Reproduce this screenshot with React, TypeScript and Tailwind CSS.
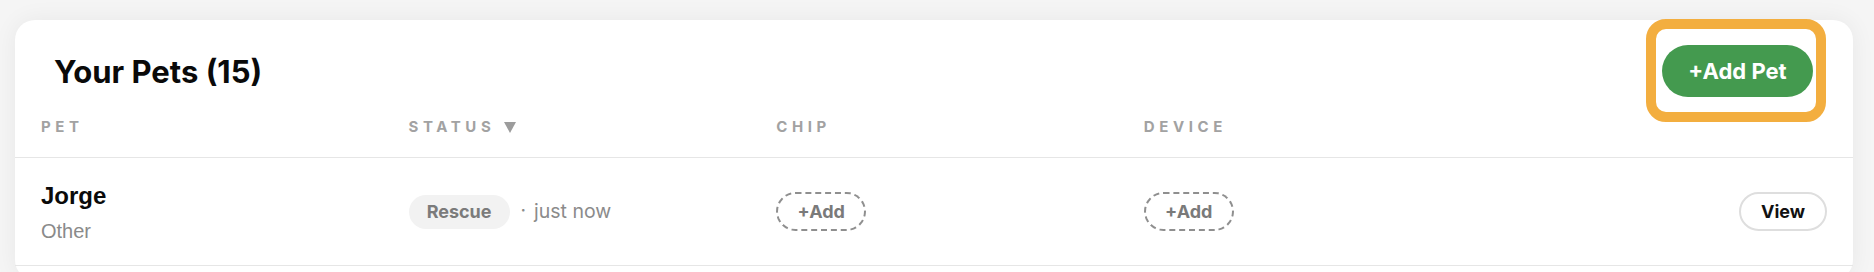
import React from "react";

const columns = ["Pet", "Status", "Chip", "Device", ""];

const DashedAdd = () => (
  <button className="h-[39px] w-[90px] rounded-full border-2 border-dashed border-[#8f8f8f] text-[18px] font-bold text-[#7a7a7a]">
    +Add
  </button>
);

const App = () => (
  <div className="min-h-[272px] bg-[#f5f5f5] pt-5 pl-[15px] pr-[21px] font-['Inter',sans-serif]">
    <div className="h-[260px] rounded-[20px] bg-white shadow-[0_0_24px_rgba(0,0,0,0.06)]">
      <div className="flex items-center justify-between pl-[39px] pr-10 pt-[25px]">
        <h1 className="mt-[2px] text-[31px] leading-[34px] font-bold text-[#0a0a0a]">
          Your Pets (15)
        </h1>
        <div className="relative">
          <div className="pointer-events-none absolute -top-[26px] -bottom-[25px] -left-4 -right-[13px] rounded-[20px] border-[10px] border-[#f3ae3f]" />
          <button className="h-[52px] w-[151px] rounded-full bg-[#449a4f] text-[22px] font-bold text-white">
            +Add Pet
          </button>
        </div>
      </div>
      <table className="w-full table-fixed border-collapse">
        <thead>
          <tr className="border-b border-[#e6e6e6]">
            {columns.map((c, i) => (
              <th
                key={i}
                className="px-[26px] pt-5 pb-5 text-left text-[15px] leading-5 font-bold uppercase tracking-[4.6px] text-[#a2a2a2]"
              >
                <span className="inline-flex items-center">
                  {c}
                  {c === "Status" && (
                    <svg width="12" height="11" viewBox="0 0 12 11" className="ml-[9px]">
                      <polygon points="0,0 12,0 6,11" fill="#9c9c9c" />
                    </svg>
                  )}
                </span>
              </th>
            ))}
          </tr>
        </thead>
        <tbody>
          <tr className="border-b border-[#e6e6e6]">
            <td className="px-[26px] pt-[24px] pb-[22px] align-middle font-['Liberation_Sans',Arial,sans-serif]">
              <div className="text-[24px] leading-7 font-bold text-[#0a0a0a]">Jorge</div>
              <div className="mt-[9px] text-[20px] leading-6 text-[#8a8a8a]">Other</div>
            </td>
            <td className="px-[26px] align-middle">
              <div className="flex items-center">
                <span className="flex h-[34px] w-[101px] items-center justify-center rounded-full bg-[#f2f2f2] text-[18px] font-bold text-[#7b7b7b]">
                  Rescue
                </span>
                <span className="ml-[11px] text-[19px] text-[#8b8b8b]">·</span>
                <span className="ml-[8px] text-[19.5px] text-[#8b8b8b]">just now</span>
              </div>
            </td>
            <td className="px-[26px] align-middle">
              <DashedAdd />
            </td>
            <td className="px-[26px] align-middle">
              <DashedAdd />
            </td>
            <td className="px-[26px] text-right align-middle">
              <button className="h-[39px] w-[88px] rounded-full border-2 border-[#dedede] text-[18px] font-bold text-[#111]">
                View
              </button>
            </td>
          </tr>
        </tbody>
      </table>
    </div>
  </div>
);

export default App;
